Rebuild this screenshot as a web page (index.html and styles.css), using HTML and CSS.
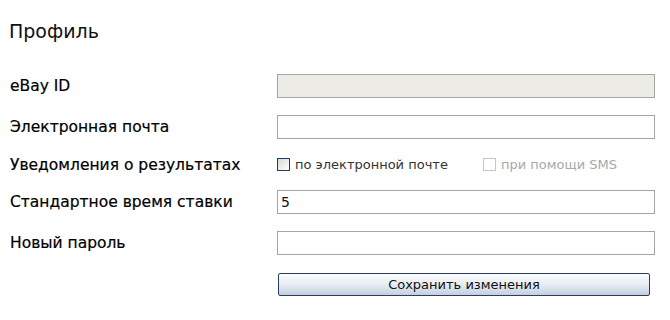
FILE: index.html
```html
<!DOCTYPE html>
<html lang="ru">

<head>
    <meta charset="UTF-8">
    <meta name="viewport" content="width=device-width, initial-scale=1.0">
    <title>Профиль</title>
    <link rel="stylesheet" href="styles.css">
</head>

<body>
    <div class="page">
        <h2 class="title">Профиль</h2>

        <form class="profile">
            <div class="row">
                <label class="name">eBay ID</label>
                <input class="field locked" type="text" disabled>
            </div>
            <div class="row">
                <label class="name">Электронная почта</label>
                <input class="field" type="text">
            </div>
            <div class="row short">
                <label class="name">Уведомления о результатах</label>
                <div class="checks">
                    <span class="check"><span class="box"></span>по электронной почте</span>
                    <span class="check off"><span class="box"></span>при помощи SMS</span>
                </div>
            </div>
            <div class="row">
                <label class="name">Стандартное время ставки</label>
                <input class="field" type="text" value="5">
            </div>
            <div class="row">
                <label class="name">Новый пароль</label>
                <input class="field" type="password">
            </div>
            <div class="row">
                <span class="name"></span>
                <button class="save" type="button">Сохранить изменения</button>
            </div>
        </form>
    </div>
</body>

</html>
```

FILE: styles.css
```css
body {
    margin: 0;
    background: #fff;
    font-family: "DejaVu Sans", Verdana, sans-serif;
    color: #111;
}

.page {
    padding: 18px 0 0 9px;
}

.title {
    margin: 0;
    font-size: 19px;
    font-weight: normal;
    line-height: 26px;
}

.profile {
    margin-top: 30px;
    display: flex;
    flex-direction: column;
    gap: 17px;
}

.row {
    display: flex;
    align-items: center;
    height: 24px;
}

.row.short {
    height: 17px;
}

.name {
    flex: 0 0 auto;
    width: 267px;
    font-size: 15.5px;
    padding-left: 1px;
    color: #000;
    -webkit-text-stroke: 0.2px #000;
}

.field {
    box-sizing: border-box;
    width: 378px;
    height: 24px;
    margin: 0;
    border: 1px solid #a5a5a5;
    padding: 0 3px;
    font-family: "DejaVu Sans", Verdana, sans-serif;
    font-size: 14px;
    color: #111;
    background: #fff;
    outline: none;
}

.field.locked {
    background: #ecebe6;
}

.checks {
    display: flex;
    font-size: 13px;
    color: #333;
}

.check {
    display: flex;
    align-items: center;
    width: 206px;
}

.check.off {
    width: auto;
    color: #a8a8a8;
}

.box {
    box-sizing: border-box;
    width: 13px;
    height: 13px;
    margin-right: 5px;
    border: 1px solid #1c3c6e;
    background: linear-gradient(135deg, #d8d8d4, #fff);
}

.check.off .box {
    border-color: #c6c6c6;
    background: #fff;
}

.save {
    box-sizing: border-box;
    width: 372px;
    height: 23px;
    margin-left: 1px;
    border: 1px solid #2c3e5e;
    border-radius: 2px;
    background: linear-gradient(#fcfdfe, #e6ecf4 50%, #c3cfe0);
    font-family: "DejaVu Sans", Verdana, sans-serif;
    font-size: 13px;
    color: #111;
    padding: 0;
}
```
